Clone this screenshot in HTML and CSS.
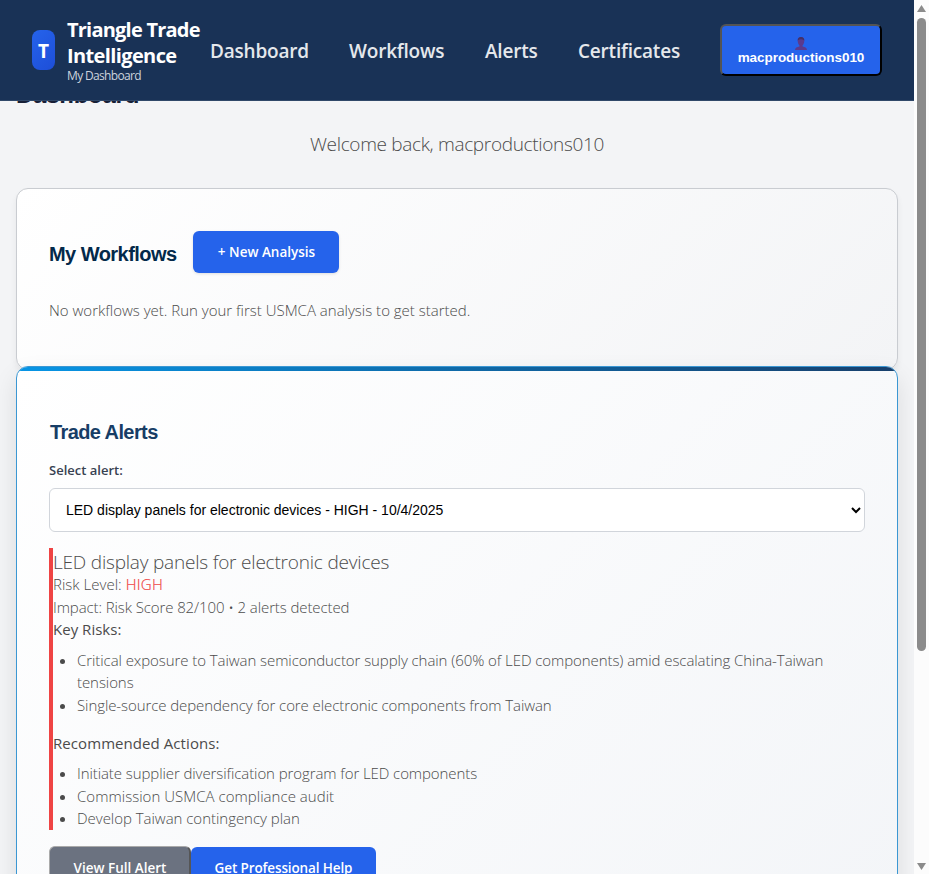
FILE: index.html
```html
<!DOCTYPE html>
<html lang="en">
<head>
<meta charset="utf-8">
<title>Triangle Trade Intelligence</title>
<link rel="stylesheet" href="styles.css">
</head>
<body>
<div class="page">
  <header class="nav">
    <div class="brand">
      <div class="logo">T</div>
      <div class="brand-text">
        <div class="brand-name"><span class="n1">Triangle Trade</span><br><span class="n2">Intelligence</span></div>
        <div class="brand-sub"><span>My Dashboard</span></div>
      </div>
    </div>
    <nav class="links">
      <a class="l1">Dashboard</a><a class="l2">Workflows</a><a class="l3">Alerts</a><a class="l4">Certificates</a>
    </nav>
    <button class="user">
      <svg width="12" height="13" viewBox="0 0 12 13"><path d="M6 0C3.8 0 2.7 1.5 2.7 3.5c0 2.200 .6 3.800 1.700 4.800v1.200C2 10 .2 10.600 0 13h12c-.2-2.400-2-3-4.400-3.500V8.300c1.100-1 1.700-2.600 1.700-4.800C9.300 1.500 8.200 0 6 0z" fill="#5b3a8e"/><path d="M2.700 3.500C2.700 1.500 3.800 0 6 0s3.300 1.500 3.300 3.500L8.700 3C7 2 5 2 3.300 3z" fill="#433168"/></svg>
      <span>macproductions010</span>
    </button>
  </header>
  <main class="content">
    <h1><span>Dashboard</span></h1>
    <p class="welcome"><span>Welcome back, macproductions010</span></p>
    <section class="card workflows">
      <div class="card-head">
        <h2><span>My Workflows</span></h2>
        <button class="btn new"><span>+ New Analysis</span></button>
      </div>
      <p class="empty"><span>No workflows yet. Run your first USMCA analysis to get started.</span></p>
    </section>
    <section class="card alerts">
      <h2><span>Trade Alerts</span></h2>
      <label><span>Select alert:</span></label>
      <div class="select">
        <span>LED display panels for electronic devices - HIGH - 10/4/2025</span>
        <svg width="10" height="7" viewBox="0 0 10 7"><path d="M1 1l4 4 4-4" fill="none" stroke="#000" stroke-width="2"/></svg>
      </div>
      <div class="detail">
        <div class="title"><span>LED display panels for electronic devices</span></div>
        <div><span class="t1">Risk Level: <b class="high">HIGH</b></span></div>
        <div><span class="t2">Impact: Risk Score 82/100 • 2 alerts detected</span></div>
        <div class="strong"><span class="t3">Key Risks:</span></div>
        <ul class="risks">
          <li><span class="t4">Critical exposure to Taiwan semiconductor supply chain (60% of LED components) amid escalating China-Taiwan</span><br><span class="t5">tensions</span></li>
          <li><span class="t6">Single-source dependency for core electronic components from Taiwan</span></li>
        </ul>
        <div class="strong"><span class="t7">Recommended Actions:</span></div>
        <ul>
          <li><span class="t8">Initiate supplier diversification program for LED components</span></li>
          <li><span class="t9">Commission USMCA compliance audit</span></li>
          <li><span class="t10">Develop Taiwan contingency plan</span></li>
        </ul>
      </div>
      <div class="actions">
        <button class="btn view"><span>View Full Alert</span></button><button class="btn help"><span>Get Professional Help</span></button>
      </div>
    </section>
  </main>
</div>
<div class="scrollbar"><i class="up"></i><i class="thumb"></i><i class="down"></i></div>
</body>
</html>
```
FILE: styles.css
```css
* { box-sizing: border-box; }
body { margin: 0; width: 929px; height: 874px; overflow: hidden; display: flex; background: #f3f4f6; font-family: "Open Sans", "Noto Sans", sans-serif; font-size: 15px; line-height: 22.5px; font-weight: 300; color: #4b4b4b; }
h1, h2, p, ul { margin: 0; }
span { white-space: nowrap; }
button { font-family: inherit; }
.page { width: 914px; height: 874px; overflow: hidden; }
.nav { position: relative; z-index: 2; height: 101px; background: #193256; border-bottom: 1px solid #304869; display: flex; align-items: center; padding: 0 32px; color: #fff; }
.brand { display: flex; align-items: center; gap: 12px; width: 178px; }
.logo { width: 23px; height: 40px; border-radius: 8px; background: linear-gradient(135deg, #2563eb, #1d4ed8); display: flex; align-items: center; justify-content: center; font-size: 19px; font-weight: 700; padding-top: 3px; }
.brand-text { margin-top: -1px; }
.brand-name { font-size: 20px; line-height: 26px; font-weight: 700; }
.n1 { letter-spacing: -.78px; }
.n2 { letter-spacing: -.62px; }
.brand-sub { font-size: 12px; line-height: 14px; font-weight: 400; color: #cdd4de; letter-spacing: -.65px; }
.links { display: flex; width: 510px; font-size: 19px; font-weight: 600; color: #e5e8ec; line-height: 28px; padding-top: 1px; }
.links a { letter-spacing: -.2px; white-space: nowrap; }
.l1 { width: 139px; }
.l2 { width: 136px; }
.l3 { width: 93px; }
.user { width: 162px; height: 52px; border: 2px outset #000; border-radius: 6px; background: #2563eb; padding: 11px 0 0; display: flex; flex-direction: column; align-items: center; justify-content: flex-start; font: 700 13.5px/16px "Liberation Sans", sans-serif; color: #fff; }
.user svg { display: block; flex: none; }
.user span { letter-spacing: -.05px; }
.content { padding: 0 16px; margin-top: -21px; }
h1 { font: 700 24px/30px "Liberation Sans", sans-serif; color: #172037; height: 30px; letter-spacing: -.25px; }
.welcome { margin-top: 19px; text-align: center; font-size: 19px; line-height: 30px; height: 59px; letter-spacing: -.33px; }
.card { border: 1px solid #c9ccd1; border-radius: 12px; background: linear-gradient(135deg, #fff, #f3f4f6); padding: 42px 32px 0; }
.workflows { height: 182px; box-shadow: 0 4px 6px rgba(0,0,0,.06); }
.card-head { display: flex; align-items: center; gap: 16px; height: 42px; }
h2 { font: 700 20px/30px "Liberation Sans", sans-serif; color: #03294a; height: 26px; letter-spacing: -.54px; }
.card-head h2 { width: 128px; }
.btn { border: 0; border-radius: 6px; color: #fff; font-weight: 600; font-size: 13.5px; line-height: 20px; padding: 0; text-align: center; white-space: nowrap; }
.new { width: 146px; height: 42px; background: #2563eb; box-shadow: 0 1px 3px rgba(0,0,0,.12); padding-left: 1px; }
.empty { margin-top: 26px; }
.alerts { position: relative; margin-top: -4px; height: 560px; border-color: #3b97d3; background: linear-gradient(135deg, #fff, #f3f5f8); padding-top: 50px; overflow: hidden; }
.alerts { box-shadow: 0 10px 25px rgba(0,0,0,.1); }
.alerts::before { content: ""; position: absolute; left: 0; right: 0; top: 0; height: 4px; background: linear-gradient(90deg, #0795e5, #173f6c); }
.alerts h2 { color: #173d66; padding-left: 1px; height: 43px; letter-spacing: -.6px; }
label { display: block; font-size: 13px; font-weight: 600; line-height: 20px; height: 28px; color: #374151; }
.select { height: 44px; border: 1px solid #d1d5db; border-radius: 6px; background: #fff; display: flex; justify-content: space-between; align-items: center; padding: 0 3px 0 16px; font: 14px "Liberation Sans", sans-serif; color: #000; }
.detail { margin-top: 16px; height: 282px; border-left: 4px solid #ef4444; letter-spacing: -.07px; }
.title { font-size: 19px; line-height: 28px; height: 25px; letter-spacing: -.2px; }
.t1, .t3 { letter-spacing: .02px; }
.t2 { letter-spacing: -.1px; }
.t6, .t8 { letter-spacing: -.085px; }
.t9 { letter-spacing: .03px; }
.t7 { letter-spacing: .07px; }
.t10 { letter-spacing: -.03px; }
.high { color: #ef4444; font-weight: 300; letter-spacing: .3px; -webkit-text-stroke: .2px #ef4444; }
.strong { font-weight: 400; }
ul { padding-left: 24px; margin-top: 8px; }
.risks { margin-bottom: 16px; }
.detail ul:last-child { margin-top: 7.5px; }
.actions { display: flex; margin-top: 17px; }
.view { width: 142px; height: 44px; background: #6b7280; border: 2px outset #aaa; margin-top: -1px; border-width: 1px 2px 2px 1px; padding: 1px 0 0 1px; }
.help { width: 185px; height: 42px; background: #2563eb; letter-spacing: -.12px; }
.scrollbar { width: 15px; height: 874px; background: #fcfcfc; display: flex; flex-direction: column; align-items: center; }
.up, .down { width: 9px; height: 7px; background: #8b8b8b; clip-path: polygon(50% 0, 100% 100%, 0 100%); margin-top: 5px; }
.thumb { width: 9px; height: 633px; border-radius: 5px; background: #8b8b8b; margin-top: 6px; }
.down { transform: rotate(180deg); margin-top: 212px; }
```
